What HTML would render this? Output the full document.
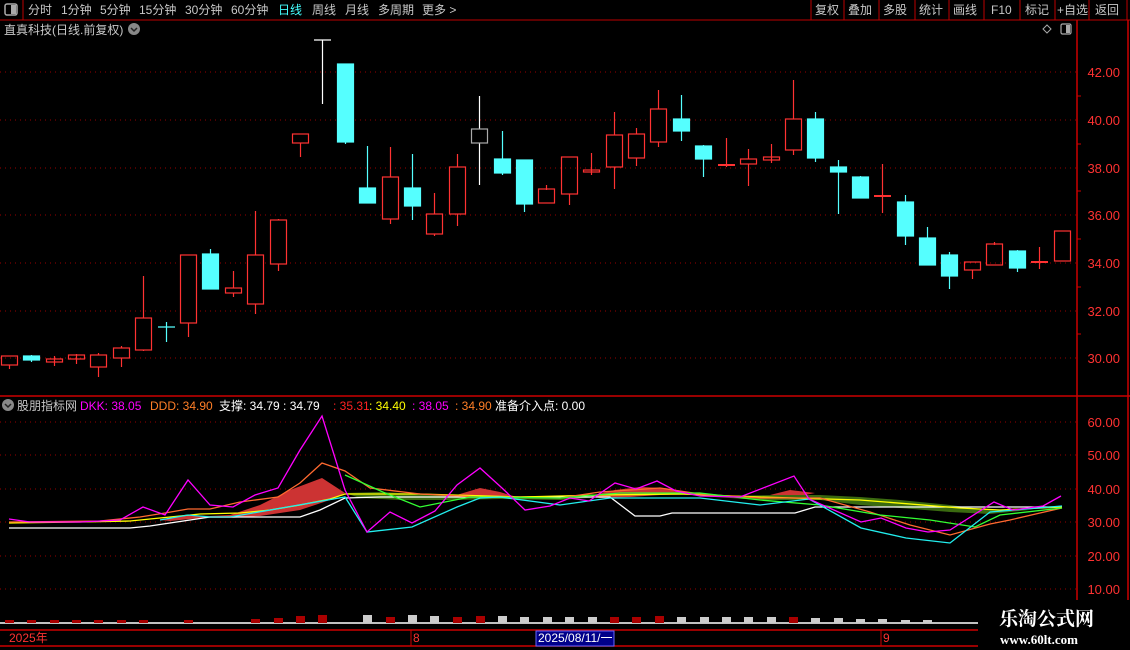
<!DOCTYPE html>
<html><head><meta charset="utf-8"><style>
html,body{margin:0;padding:0;background:#000;width:1130px;height:650px;overflow:hidden}
body{font-family:"Liberation Sans","Noto Sans CJK SC",sans-serif;}
svg{display:block}
</style></head><body>
<svg width="1130" height="650" xmlns="http://www.w3.org/2000/svg" font-family="Liberation Sans, Noto Sans CJK SC, sans-serif" font-size="12">
<rect width="1130" height="650" fill="#000"/>
<!-- top bar -->
<line x1="0" y1="20" x2="1130" y2="20" stroke="#b00" />
<line x1="23" y1="0" x2="23" y2="20" stroke="#b00"/>
<rect x="5" y="4" width="12" height="11" rx="2" fill="none" stroke="#aaa" stroke-width="1.5"/>
<rect x="11" y="5" width="5" height="9" fill="#aaa"/>
<g fill="#c8c8c8">
<text x="28" y="14">分时</text><text x="61" y="14">1分钟</text><text x="100" y="14">5分钟</text>
<text x="139" y="14">15分钟</text><text x="185" y="14">30分钟</text><text x="231" y="14">60分钟</text>
<text x="278" y="14" fill="#4ff">日线</text><text x="312" y="14">周线</text><text x="345" y="14">月线</text>
<text x="378" y="14">多周期</text><text x="422" y="14">更多 &gt;</text>
</g>
<g stroke="#b00"><line x1="811" y1="0" x2="811" y2="20"/><line x1="844" y1="0" x2="844" y2="20"/><line x1="879" y1="0" x2="879" y2="20"/><line x1="915" y1="0" x2="915" y2="20"/><line x1="949" y1="0" x2="949" y2="20"/><line x1="984" y1="0" x2="984" y2="20"/><line x1="1020" y1="0" x2="1020" y2="20"/><line x1="1055" y1="0" x2="1055" y2="20"/><line x1="1089" y1="0" x2="1089" y2="20"/><line x1="1127" y1="0" x2="1127" y2="20"/></g>
<g fill="#c8c8c8">
<text x="815" y="14">复权</text><text x="848" y="14">叠加</text><text x="883" y="14">多股</text><text x="919" y="14">统计</text><text x="953" y="14">画线</text><text x="991" y="14">F10</text><text x="1025" y="14">标记</text><text x="1057" y="14">+自选</text><text x="1095" y="14">返回</text>
</g>
<!-- title row -->
<text x="4" y="34" fill="#c8c8c8">直真科技(日线.前复权)</text>
<circle cx="134" cy="29" r="6" fill="#888"/><path d="M131 28 l3 3 l3 -3" stroke="#222" stroke-width="1.5" fill="none"/>
<path d="M1047 25 l4 4 l-4 4 l-4 -4z" fill="none" stroke="#aaa"/>
<rect x="1061" y="24" width="10" height="10" rx="1.5" fill="none" stroke="#aaa" stroke-width="1.2"/><rect x="1066" y="25" width="4" height="8" fill="#aaa"/>
<!-- axis lines -->
<line x1="1077" y1="20" x2="1077" y2="630" stroke="#c00" stroke-width="1.5"/>
<line x1="1128" y1="20" x2="1128" y2="600" stroke="#c00" stroke-width="1.5"/>
<line x1="0" y1="396" x2="1130" y2="396" stroke="#c00" stroke-width="1.5"/>
<!-- grid -->
<g stroke="#900" stroke-dasharray="1,4">
<line x1="0" y1="72" x2="1077" y2="72"/><line x1="0" y1="120" x2="1077" y2="120"/><line x1="0" y1="168" x2="1077" y2="168"/><line x1="0" y1="215" x2="1077" y2="215"/><line x1="0" y1="263" x2="1077" y2="263"/><line x1="0" y1="311" x2="1077" y2="311"/><line x1="0" y1="358" x2="1077" y2="358"/>
<line x1="0" y1="422" x2="1077" y2="422"/><line x1="0" y1="455" x2="1077" y2="455"/><line x1="0" y1="489" x2="1077" y2="489"/><line x1="0" y1="522" x2="1077" y2="522"/><line x1="0" y1="556" x2="1077" y2="556"/><line x1="0" y1="589" x2="1077" y2="589"/>
</g>
<g fill="#ff3232" font-size="13" text-anchor="end">
<text x="1120" y="77">42.00</text><text x="1120" y="125">40.00</text><text x="1120" y="173">38.00</text><text x="1120" y="220">36.00</text><text x="1120" y="268">34.00</text><text x="1120" y="316">32.00</text><text x="1120" y="363">30.00</text>
<text x="1120" y="427">60.00</text><text x="1120" y="460">50.00</text><text x="1120" y="494">40.00</text><text x="1120" y="527">30.00</text><text x="1120" y="561">20.00</text><text x="1120" y="594">10.00</text>
</g>
<g stroke="#c00"><line x1="1077" y1="96" x2="1081" y2="96"/><line x1="1077" y1="144" x2="1081" y2="144"/><line x1="1077" y1="191" x2="1081" y2="191"/><line x1="1077" y1="239" x2="1081" y2="239"/><line x1="1077" y1="287" x2="1081" y2="287"/><line x1="1077" y1="334" x2="1081" y2="334"/></g>
<!-- candles -->
<g stroke="#ff3232" fill="none" stroke-width="1.2">
<line x1="9.5" y1="365" x2="9.5" y2="369"/><rect x="1.5" y="356" width="16" height="9"/>
<line x1="54.5" y1="356" x2="54.5" y2="366"/><rect x="46.5" y="359" width="16" height="3"/>
<line x1="76.5" y1="354" x2="76.5" y2="364"/><rect x="68.5" y="355" width="16" height="4"/>
<line x1="98.5" y1="353" x2="98.5" y2="377"/><rect x="90.5" y="355" width="16" height="12" fill="#000"/>
<line x1="121.5" y1="346" x2="121.5" y2="367"/><rect x="113.5" y="348" width="16" height="10" fill="#000"/>
<line x1="143.5" y1="276" x2="143.5" y2="351"/><rect x="135.5" y="318" width="16" height="32" fill="#000"/>
<line x1="188.5" y1="323" x2="188.5" y2="337"/><rect x="180.5" y="255" width="16" height="68" fill="#000"/>
<line x1="233.5" y1="271" x2="233.5" y2="297"/><rect x="225.5" y="288" width="16" height="5" fill="#000"/>
<line x1="255.5" y1="211" x2="255.5" y2="314"/><rect x="247.5" y="255" width="16" height="49" fill="#000"/>
<line x1="278.5" y1="219" x2="278.5" y2="271"/><rect x="270.5" y="220" width="16" height="44" fill="#000"/>
<line x1="300.5" y1="143" x2="300.5" y2="157"/><rect x="292.5" y="134" width="16" height="9"/>
<line x1="390.5" y1="147" x2="390.5" y2="224"/><rect x="382.5" y="177" width="16" height="42" fill="#000"/>
<line x1="434.5" y1="193" x2="434.5" y2="236"/><rect x="426.5" y="214" width="16" height="20" fill="#000"/>
<line x1="457.5" y1="154" x2="457.5" y2="226"/><rect x="449.5" y="167" width="16" height="47" fill="#000"/>
<line x1="546.5" y1="185" x2="546.5" y2="190"/><rect x="538.5" y="189" width="16" height="14"/>
<line x1="569.5" y1="194" x2="569.5" y2="205"/><rect x="561.5" y="157" width="16" height="37"/>
<line x1="591.5" y1="153" x2="591.5" y2="175"/><rect x="583.5" y="170" width="16" height="2"/>
<line x1="614.5" y1="112" x2="614.5" y2="189"/><rect x="606.5" y="135" width="16" height="32" fill="#000"/>
<line x1="636.5" y1="128" x2="636.5" y2="166"/><rect x="628.5" y="134" width="16" height="24" fill="#000"/>
<line x1="658.5" y1="90" x2="658.5" y2="147"/><rect x="650.5" y="109" width="16" height="33" fill="#000"/>
<line x1="726.5" y1="138" x2="726.5" y2="167"/><line x1="718" y1="165" x2="735" y2="165" stroke-width="2"/>
<line x1="748.5" y1="149" x2="748.5" y2="186"/><rect x="740.5" y="159" width="16" height="5" fill="#000"/>
<line x1="771.5" y1="144" x2="771.5" y2="163"/><rect x="763.5" y="157" width="16" height="3"/>
<line x1="793.5" y1="80" x2="793.5" y2="155"/><rect x="785.5" y="119" width="16" height="31" fill="#000"/>
<line x1="882.5" y1="164" x2="882.5" y2="213"/><line x1="874" y1="196" x2="891" y2="196" stroke-width="2"/>
<line x1="972.5" y1="270" x2="972.5" y2="279"/><rect x="964.5" y="262" width="16" height="8"/>
<line x1="994.5" y1="242" x2="994.5" y2="245"/><rect x="986.5" y="244" width="16" height="21"/>
<line x1="1039.5" y1="247" x2="1039.5" y2="269"/><line x1="1031" y1="262" x2="1048" y2="262" stroke-width="2"/>
<rect x="1054.5" y="231" width="16" height="30"/>
</g>
<g fill="#55ffff" stroke="#55ffff" stroke-width="1.2">
<line x1="31.5" y1="355" x2="31.5" y2="362"/><rect x="23.5" y="356" width="16" height="4"/>
<line x1="166.5" y1="322" x2="166.5" y2="342"/><line x1="158" y1="327" x2="175" y2="327"/>
<line x1="210.5" y1="249" x2="210.5" y2="254"/><rect x="202.5" y="254" width="16" height="35"/>
<line x1="345.5" y1="142" x2="345.5" y2="144"/><rect x="337.5" y="64" width="16" height="78"/>
<line x1="367.5" y1="146" x2="367.5" y2="188"/><rect x="359.5" y="188" width="16" height="15"/>
<line x1="412.5" y1="154" x2="412.5" y2="220"/><rect x="404.5" y="188" width="16" height="18"/>
<line x1="502.5" y1="131" x2="502.5" y2="175"/><rect x="494.5" y="159" width="16" height="14"/>
<line x1="524.5" y1="204" x2="524.5" y2="212"/><rect x="516.5" y="160" width="16" height="44"/>
<line x1="681.5" y1="95" x2="681.5" y2="141"/><rect x="673.5" y="119" width="16" height="12"/>
<line x1="703.5" y1="145" x2="703.5" y2="177"/><rect x="695.5" y="146" width="16" height="13"/>
<line x1="815.5" y1="112" x2="815.5" y2="162"/><rect x="807.5" y="119" width="16" height="39"/>
<line x1="838.5" y1="160" x2="838.5" y2="214"/><rect x="830.5" y="167" width="16" height="5"/>
<line x1="860.5" y1="176" x2="860.5" y2="178"/><rect x="852.5" y="177" width="16" height="21"/>
<line x1="905.5" y1="195" x2="905.5" y2="245"/><rect x="897.5" y="202" width="16" height="34"/>
<line x1="927.5" y1="227" x2="927.5" y2="265"/><rect x="919.5" y="238" width="16" height="27"/>
<line x1="949.5" y1="252" x2="949.5" y2="289"/><rect x="941.5" y="255" width="16" height="21"/>
<line x1="1017.5" y1="250" x2="1017.5" y2="272"/><rect x="1009.5" y="251" width="16" height="17"/>
</g>
<g stroke="#fff" stroke-width="1.2" fill="#000">
<line x1="322.5" y1="40" x2="322.5" y2="104"/><line x1="314" y1="40" x2="331" y2="40"/>
<line x1="479.5" y1="96" x2="479.5" y2="185"/><rect x="471.5" y="129" width="16" height="14" stroke="#aaa"/>
</g>
<!-- indicator label -->
<circle cx="8" cy="405" r="6" fill="#888"/><path d="M5 404 l3 3 l3 -3" stroke="#222" stroke-width="1.5" fill="none"/>
<text x="17" y="410" fill="#c8c8c8">股朋指标网</text>
<text x="80" y="410" fill="#f0f">DKK: 38.05</text>
<text x="150" y="410" fill="#ff7f27">DDD: 34.90</text>
<text x="219" y="410" fill="#fff">支撑: 34.79 : 34.79</text>
<text x="333" y="410" fill="#f22">: 35.31</text>
<text x="369" y="410" fill="#ff0">: 34.40</text>
<text x="412" y="410" fill="#f0f">: 38.05</text>
<text x="455" y="410" fill="#ff7f27">: 34.90</text>
<text x="495" y="410" fill="#fff">准备介入点: 0.00</text>
<!-- indicator fills -->
<polygon points="160,520 188,515 210,516 230,515 260,505 290,490 322,478 345,493 330,500 300,510 260,516 230,518 200,518 170,521" fill="#cc3333"/>
<polygon points="450,497 480,488 500,492 520,498 500,497 470,498" fill="#cc3333"/>
<polygon points="590,496 615,490 640,487 665,488 700,494 660,495 630,497 600,498" fill="#cc3333"/>
<polygon points="770,495 790,490 815,493 800,496 780,497" fill="#cc3333"/>
<polygon points="345,493 380,492 420,494 470,497 520,497 600,497 560,500 500,499 450,500 400,500 360,498" fill="#3a6a10"/>
<polygon points="700,496 780,495 820,495 860,497 900,500 950,505 990,510 1030,510 990,514 950,512 900,508 860,505 820,500 760,500" fill="#3a6a10"/>
<!-- indicator lines -->
<g fill="none" stroke-width="1.3">
<polyline stroke="#fff" points="9,528 130,528 150,526 170,523 190,520 210,517 300,517 320,510 345,498 380,497 610,497 635,516 660,516 672,513 795,513 815,507 1062,507"/>
<polyline stroke="#ff0" points="9,523 80,522 130,521 170,517 200,514 240,513 270,510 300,505 330,499 345,494 420,494 520,497 600,495 680,494 760,497 860,500 960,508 1000,510 1062,507"/>
<polyline stroke="#ff6a30" points="9,522 100,521 140,517 165,513 188,509 210,509 240,502 278,497 300,483 322,463 345,471 370,488 420,494 480,497 560,498 600,492 660,488 700,494 760,498 820,498 870,512 910,525 950,535 990,524 1010,520 1040,513 1062,508"/>
<polyline stroke="#3f3" points="345,475 385,493 420,507 470,497 560,498 620,493 700,493 760,500 820,505 880,515 930,520 975,527 1000,515 1062,508"/>
<polyline stroke="#2ee" points="160,520 188,515 210,517 230,517 345,497 367,532 412,527 457,507 480,498 500,497 560,505 610,498 700,498 760,505 809,499 861,528 906,538 950,543 990,512 1062,506"/>
<polyline stroke="#f0f" points="9,519 30,522 80,522 120,520 143,507 165,515 188,480 210,505 233,507 255,495 278,488 300,450 322,416 345,490 367,532 390,512 412,523 435,511 457,485 480,468 502,488 525,510 550,506 570,498 589,501 615,483 636,489 657,481 676,491 700,496 740,497 794,476 809,499 861,522 881,518 906,528 928,532 950,530 994,502 1013,510 1043,506 1061,496"/>
</g>
<!-- volume -->
<line x1="0" y1="623" x2="1000" y2="623" stroke="#fff" stroke-width="1.5"/>
<g fill="#a00">
<rect x="5" y="620" width="9" height="3"/><rect x="27" y="620" width="9" height="3"/><rect x="50" y="620" width="9" height="3"/><rect x="72" y="620" width="9" height="3"/><rect x="94" y="620" width="9" height="3"/><rect x="117" y="620" width="9" height="3"/><rect x="139" y="620" width="9" height="3"/><rect x="184" y="620" width="9" height="3"/><rect x="251" y="619" width="9" height="4"/><rect x="274" y="618" width="9" height="5"/><rect x="296" y="616" width="9" height="7"/><rect x="318" y="615" width="9" height="8"/><rect x="386" y="617" width="9" height="6"/><rect x="453" y="617" width="9" height="6"/><rect x="476" y="616" width="9" height="7"/><rect x="610" y="617" width="9" height="6"/><rect x="632" y="617" width="9" height="6"/><rect x="655" y="616" width="9" height="7"/><rect x="789" y="617" width="9" height="6"/></g>
<g fill="#ccc">
<rect x="363" y="615" width="9" height="8"/><rect x="408" y="615" width="9" height="8"/><rect x="430" y="616" width="9" height="7"/><rect x="498" y="616" width="9" height="7"/><rect x="520" y="617" width="9" height="6"/><rect x="543" y="617" width="9" height="6"/><rect x="565" y="617" width="9" height="6"/><rect x="588" y="617" width="9" height="6"/><rect x="677" y="617" width="9" height="6"/><rect x="700" y="617" width="9" height="6"/><rect x="722" y="617" width="9" height="6"/><rect x="744" y="617" width="9" height="6"/><rect x="767" y="617" width="9" height="6"/><rect x="811" y="618" width="9" height="5"/><rect x="834" y="618" width="9" height="5"/><rect x="856" y="619" width="9" height="4"/><rect x="878" y="619" width="9" height="4"/><rect x="901" y="620" width="9" height="3"/><rect x="923" y="620" width="9" height="3"/></g>
<!-- time axis -->
<line x1="0" y1="630" x2="978" y2="630" stroke="#c00" stroke-width="1.5"/>
<line x1="0" y1="646" x2="978" y2="646" stroke="#c00" stroke-width="1.5"/>
<line x1="411" y1="630" x2="411" y2="646" stroke="#c00"/>
<line x1="881" y1="630" x2="881" y2="646" stroke="#c00"/>
<text x="9" y="642" fill="#ff3232">2025年</text>
<text x="413" y="642" fill="#ff3232">8</text>
<text x="883" y="642" fill="#ff3232">9</text>
<rect x="536" y="631" width="78" height="15" fill="#00008a" stroke="#66f"/>
<text x="538" y="642" fill="#fff">2025/08/11/一</text>
<!-- watermark -->
<rect x="978" y="600" width="152" height="50" fill="#000"/>
<text x="999" y="625" fill="#fff" font-family="Liberation Serif, Noto Serif CJK SC, serif" font-size="19" font-weight="bold">乐淘公式网</text>
<text x="1000" y="644" fill="#fff" font-family="Liberation Serif, serif" font-size="13" font-weight="bold">www.60lt.com</text>
</svg>
</body></html>
